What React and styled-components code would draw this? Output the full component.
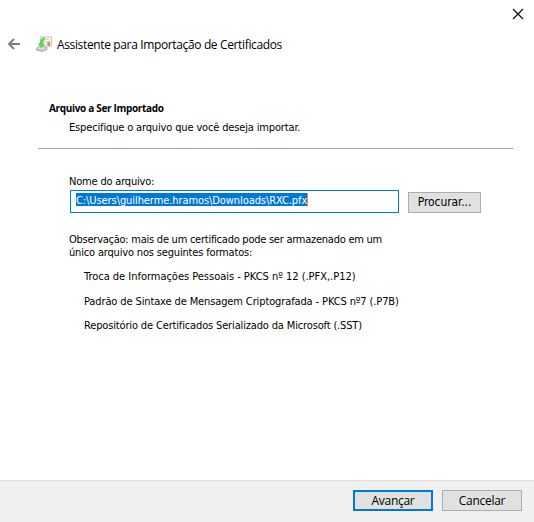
import React from 'react'
import styled, { createGlobalStyle } from 'styled-components';

const formats = [
    { text: 'Troca de Informações Pessoais - PKCS nº 12 (.PFX,.P12)', gap: 0, spacing: -0.02 },
    { text: 'Padrão de Sintaxe de Mensagem Criptografada - PKCS nº7 (.P7B)', gap: 12, spacing: -0.12 },
    { text: 'Repositório de Certificados Serializado da Microsoft (.SST)', gap: 11, spacing: -0.15 },
]

const App = () => {
    return (
        <>
            <GlobalStyle />
            <Wizard>
                <TitleBar>
                    <CloseIcon />
                </TitleBar>
                <Header>
                    <BackIcon />
                    <CertificateIcon />
                    <Title>Assistente para Importação de Certificados</Title>
                </Header>
                <Intro>
                    <Heading>Arquivo a Ser Importado</Heading>
                    <Subheading>Especifique o arquivo que você deseja importar.</Subheading>
                </Intro>
                <Content>
                    <Label>Nome do arquivo:</Label>
                    <FileRow>
                        <FileField>
                            <Selection>C:\Users\guilherme.hramos\Downloads\RXC.pfx</Selection>
                        </FileField>
                        <BrowseButton>Procurar...</BrowseButton>
                    </FileRow>
                    <Note>
                        <Line $spacing={-0.25}>Observação: mais de um certificado pode ser armazenado em um</Line>
                        <Line $spacing={-0.17}>único arquivo nos seguintes formatos:</Line>
                    </Note>
                    <Formats>
                        {formats.map(({ text, gap, spacing }) => (
                            <Format key={text} $gap={gap} $spacing={spacing}>{text}</Format>
                        ))}
                    </Formats>
                </Content>
                <Footer>
                    <Button $primary>Avançar</Button>
                    <Button>Cancelar</Button>
                </Footer>
            </Wizard>
        </>
    )
}

const CloseIcon = () => (
    <svg width="12" height="12" viewBox="0 0 12 12" fill="none" stroke="#000" strokeWidth="1.1">
        <path d="M1 1L11 11M11 1L1 11" />
    </svg>
)

const BackIcon = () => (
    <svg width="14" height="12" viewBox="0 0 14 12" fill="none" stroke="#7d7d7d" strokeWidth="1.9">
        <path d="M13 6H2M7 1L2 6L7 11" />
    </svg>
)

const CertificateIcon = () => (
    <svg width="16" height="16" viewBox="0 0 16 16">
        <path d="M4.5 0.8H15.5V10H4.5Z" fill="#f5f2e8" stroke="#c9c4b2" strokeWidth="0.9" />
        <path d="M8.5 3.5H13M9 5.5H11" stroke="#d0cfcb" strokeWidth="0.8" />
        <path d="M11.8 7.5L11.5 10.3L12.7 9.5L14 10.3L13.8 7.5Z" fill="#7d8487" />
        <circle cx="12.8" cy="7" r="1.7" fill="#e3a126" />
        <path d="M0.5 12.2L4 10L11 11.5V13.3L6.5 15.5L0.5 14.2Z" fill="#dcdfe0" stroke="#8c9294" strokeWidth="0.7" />
        <path d="M1.5 13.2L6.3 14.3L10 12.6" fill="none" stroke="#9ba1a3" strokeWidth="0.6" />
        <path d="M7.5 1.5C5.5 2.5 4.3 4.8 4 7.5L2.3 7.3L4.8 11.8L8.8 8.3L7 8C7 5.5 7.7 3.6 9.2 2.4Z" fill="#62d65b" stroke="#4dbb4b" strokeWidth="0.4" />
    </svg>
)

const GlobalStyle = createGlobalStyle`
    * {
        box-sizing: border-box;
    }

    body {
        margin: 0;
        background-color: #fff;
    }
`

const Wizard = styled.div`
    display: flex;
    flex-direction: column;
    width: 534px;
    height: 522px;
    overflow: hidden;
    font-family: "DejaVu Sans Condensed", "DejaVu Sans", sans-serif;
    font-stretch: condensed;
    font-size: 11px;
    line-height: 13px;
    color: #000;
    background-color: #fff;
    white-space: nowrap;
`

const TitleBar = styled.div`
    display: flex;
    justify-content: flex-end;
    height: 28px;
    padding: 8px 10px 0 0;
`

const Header = styled.header`
    display: flex;
    align-items: center;
    height: 32px;
    padding-left: 7px;

    svg:nth-child(2) {
        margin-left: 15px;
    }
`

const Title = styled.h1`
    margin: 2px 0 0 5px;
    font-family: "Open Sans", sans-serif;
    font-stretch: normal;
    font-size: 12px;
    font-weight: 400;
    line-height: 16px;
    letter-spacing: -0.36px;
`

const Intro = styled.section`
    width: 475px;
    height: 89px;
    margin-left: 38px;
    padding: 42px 0 0 11px;
    border-bottom: 1px solid #a0a0a0;
`

const Heading = styled.h2`
    margin: 0;
    font-family: "Open Sans", sans-serif;
    font-stretch: normal;
    font-size: 10px;
    font-weight: 700;
    line-height: 13px;
    letter-spacing: -0.33px;
`

const Subheading = styled.p`
    margin: 6px 0 0 20px;
    letter-spacing: -0.15px;
`

const Content = styled.main`
    flex: 1;
    padding: 26px 0 0 69px;
`

const Label = styled.div`
    letter-spacing: -0.19px;
`

const FileRow = styled.div`
    display: flex;
    align-items: center;
    margin: 2px 0 0 1px;
`

const FileField = styled.div`
    display: flex;
    align-items: flex-start;
    width: 329px;
    height: 23px;
    padding: 2px 0 0 5px;
    border: 1px solid #0078d7;
`

const Selection = styled.span`
    height: 13px;
    line-height: 15px;
    letter-spacing: -0.08px;
    color: #fff;
    background-color: #0078d7;
    border-right: 1px solid #ff8728;
`

const Note = styled.div`
    margin-top: 20px;
`

const Line = styled.p`
    margin: 0;
    letter-spacing: ${({ $spacing }) => $spacing}px;
`

const Formats = styled.ul`
    margin: 11px 0 0 15px;
    padding: 0;
    list-style: none;
`

const Format = styled.li`
    margin-top: ${({ $gap }) => $gap}px;
    letter-spacing: ${({ $spacing }) => $spacing}px;
`

const Footer = styled.footer`
    display: flex;
    gap: 9px;
    justify-content: flex-end;
    height: 42px;
    padding: 9px 12px 0 0;
    border-top: 1px solid #dfdfdf;
    background-color: #f0f0f0;
`

const Button = styled.button`
    width: 80px;
    height: 21px;
    padding: 0;
    border: ${({ $primary }) => $primary ? '2px solid #0078d7' : '1px solid #adadad'};
    font-family: "Open Sans", sans-serif;
    font-size: 12px;
    line-height: 17px;
    letter-spacing: -0.3px;
    color: #000;
    background-color: #e1e1e1;
`

const BrowseButton = styled(Button)`
    width: 73px;
    margin: 1px 0 0 9px;
    font-family: inherit;
    font-stretch: inherit;
    letter-spacing: -0.1px;
`

export default App
